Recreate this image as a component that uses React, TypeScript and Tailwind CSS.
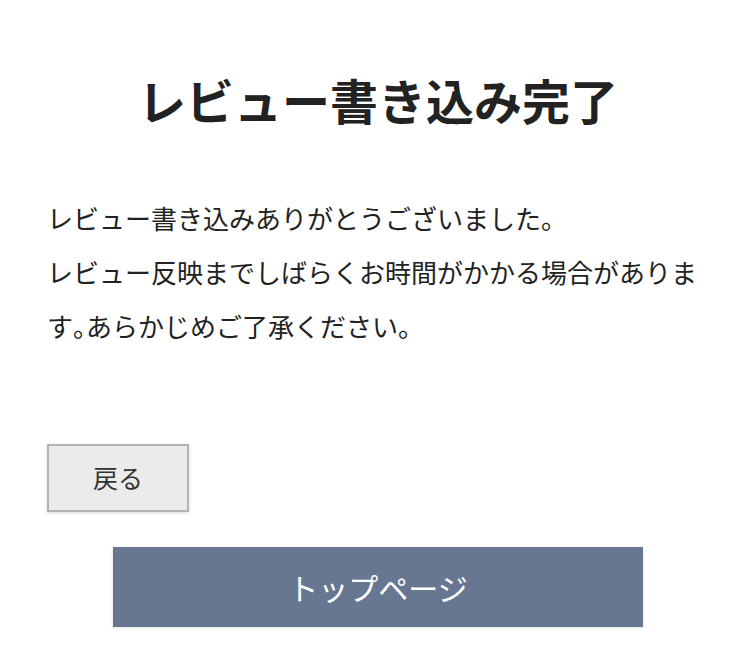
export default function App() {
  return (
    <div
      className="min-h-screen bg-white text-[#222]"
      style={{ fontFamily: '"Noto Sans CJK JP", "Noto Sans", sans-serif' }}
    >
      <div className="px-[47px] pt-[68px] pb-[35px]">
        <h1 className="text-center text-[48px] font-bold leading-[62px] text-[#222]">
          レビュー書き込み完了
        </h1>

        <p className="mt-[61px] text-[26px] leading-[54px] text-[#222]">
          レビュー書き込みありがとうございました。
          <br />
          レビュー反映までしばらくお時間がかかる場合がありま
          す<span className="[font-feature-settings:'halt']">。</span>
          あらかじめご了承ください。
        </p>

        <button
          type="button"
          className="mt-[91px] flex h-[68px] w-[142px] items-center justify-center border-2 border-[#b3b3b3] bg-[#ebebeb] text-[25px] text-[#333] shadow-[0_1px_3px_rgba(0,0,0,0.15)]"
        >
          戻る
        </button>
      </div>

      <div className="flex justify-center">
        <button
          type="button"
          className="flex h-[80px] w-[70%] items-center justify-center bg-[#687791] text-[30px] text-white shadow-[0_1px_3px_rgba(0,0,0,0.12)]"
        >
          トップページ
        </button>
      </div>
    </div>
  );
}
